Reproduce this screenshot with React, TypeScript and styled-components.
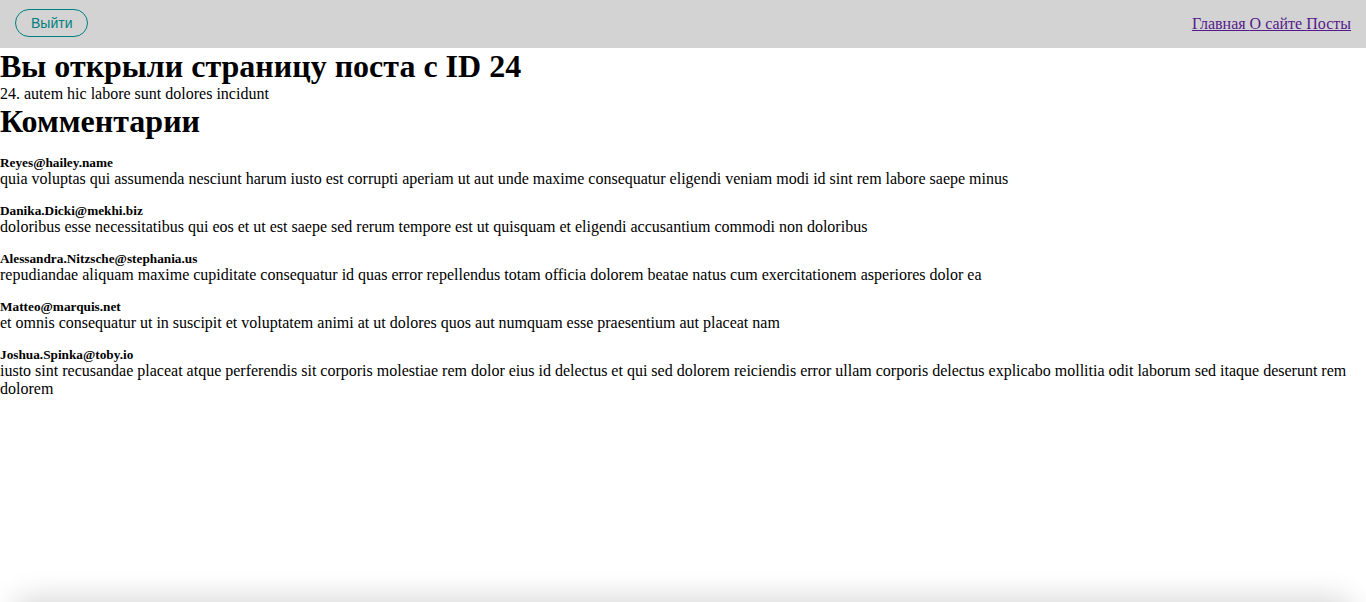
import React from 'react';
import styled, {createGlobalStyle} from 'styled-components';

const GlobalStyle = createGlobalStyle`
  body {
    margin: 0;
    font-family: "Liberation Serif", "Times New Roman", serif;
    font-size: 16px;
    color: #000;
    background: #fff;
  }
`;

const Navbar = styled.nav`
  height: 48px;
  background: lightgray;
  display: flex;
  align-items: center;
  justify-content: space-between;
  padding: 0 15px;
`;

const LogoutButton = styled.button`
  height: 28px;
  margin-top: -2px;
  padding: 0 15px;
  border: 1px solid teal;
  border-radius: 14px;
  background: transparent;
  color: teal;
  font-family: "Liberation Sans", Arial, sans-serif;
  font-size: 14px;
  cursor: pointer;
`;

const Links = styled.div`
  > a {
    color: #551a8b;
    font-size: 16px;
  }
`;

const Title = styled.h1`
  margin: 0;
  font-size: 32px;
  line-height: 37px;
`;

const PostText = styled.div`
  line-height: 18px;
`;

const Comment = styled.div`
  margin-top: 15px;
  > h5 {
    margin: 0;
    font-size: 0.83em;
    line-height: 15px;
  }
  > div {
    line-height: 18px;
  }
`;

const BottomShade = styled.div`
  position: fixed;
  left: 12px;
  right: 12px;
  top: 100%;
  height: 40px;
  border-radius: 20px;
  box-shadow: 0 -4px 30px rgba(0, 0, 0, 0.16);
  pointer-events: none;
`;

const comments = [
  {email: 'Reyes@hailey.name', body: 'quia voluptas qui assumenda nesciunt harum iusto est corrupti aperiam ut aut unde maxime consequatur eligendi veniam modi id sint rem labore saepe minus'},
  {email: 'Danika.Dicki@mekhi.biz', body: 'doloribus esse necessitatibus qui eos et ut est saepe sed rerum tempore est ut quisquam et eligendi accusantium commodi non doloribus'},
  {email: 'Alessandra.Nitzsche@stephania.us', body: 'repudiandae aliquam maxime cupiditate consequatur id quas error repellendus totam officia dolorem beatae natus cum exercitationem asperiores dolor ea'},
  {email: 'Matteo@marquis.net', body: 'et omnis consequatur ut in suscipit et voluptatem animi at ut dolores quos aut numquam esse praesentium aut placeat nam'},
  {email: 'Joshua.Spinka@toby.io', body: 'iusto sint recusandae placeat atque perferendis sit corporis molestiae rem dolor eius id delectus et qui sed dolorem reiciendis error ullam corporis delectus explicabo mollitia odit laborum sed itaque deserunt rem dolorem'},
];

const App: React.FC = () => {
  return (
    <>
      <GlobalStyle/>
      <Navbar>
        <LogoutButton>Выйти</LogoutButton>
        <Links>
          <a href="#">Главная </a>
          <a href="#">О сайте </a>
          <a href="#">Посты</a>
        </Links>
      </Navbar>
      <Title>Вы открыли страницу поста с ID 24</Title>
      <PostText>24. autem hic labore sunt dolores incidunt</PostText>
      <Title>Комментарии</Title>
      {comments.map(c =>
        <Comment key={c.email}>
          <h5>{c.email}</h5>
          <div>{c.body}</div>
        </Comment>
      )}
      <BottomShade/>
    </>
  );
};

export default App;
